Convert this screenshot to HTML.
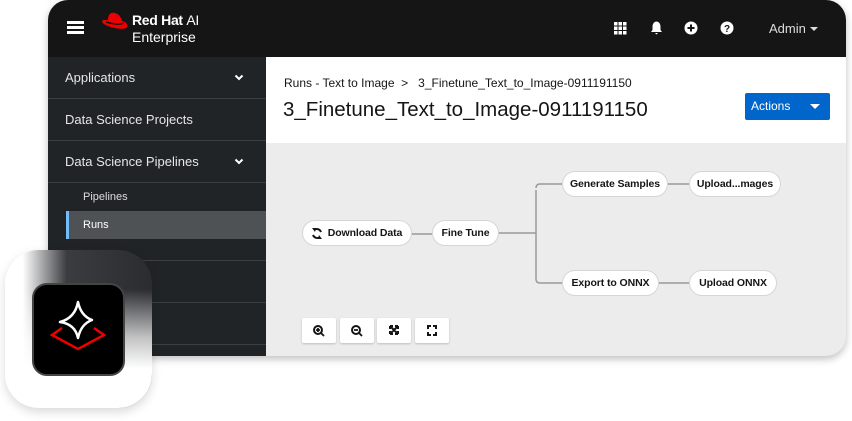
<!DOCTYPE html>
<html><head><style>
*{margin:0;padding:0;box-sizing:border-box}
body{width:852px;height:421px;background:#fff;font-family:"Liberation Sans",sans-serif;position:relative;overflow:hidden}
.win{position:absolute;left:48px;top:0;width:798px;height:356px;border-radius:20px;overflow:hidden;background:#ececec;box-shadow:0 3px 8px rgba(0,0,0,.25)}
.hdr{position:absolute;left:0;top:0;width:100%;height:57px;background:#151515}
.side{position:absolute;left:0;top:57px;width:218px;height:300px;background:#212427}
.row{position:absolute;left:0;width:218px;color:#e6e6e6;font-size:13px;border-bottom:1px solid #3c3f42}
.chev{position:absolute;left:186px;top:17px}
.main{position:absolute;left:218px;top:57px;width:580px;height:86px;background:#fff}
.node{position:absolute;height:26px;background:#fff;border:1px solid #d6d6d6;border-radius:14px;font-size:10.5px;font-weight:bold;color:#151515;line-height:24px;text-align:center;letter-spacing:-.1px}
.zb{position:absolute;top:318px;width:34px;height:25px;background:#fff;border-radius:2px;box-shadow:0 1px 2px rgba(0,0,0,.2)}
.t{position:absolute;color:#fff}
</style></head><body>
<div class="win">
 <div class="hdr">
  <div style="position:absolute;left:19px;top:21px;width:17px;height:3px;background:#fff;box-shadow:0 5px 0 #fff,0 10px 0 #fff"></div>
  <svg style="position:absolute;left:52px;top:11px" width="30" height="20" viewBox="0 0 30 20"><path d="M8 9 C8 3 11 1 15 2 C19 3 21 6 22 10 C26 11 28 13 27 16 C25 19 15 18 8 15 C3 13 1 11 3 9 Z" fill="#e00"/><path d="M6 11 C12 13 20 14 24 12" stroke="#111" stroke-width="1.5" fill="none"/></svg>
  <div class="t" style="left:84px;top:12px;font-size:14px;font-weight:bold;letter-spacing:-.3px">Red Hat <span style="font-weight:normal">AI</span></div>
  <div class="t" style="left:84px;top:29px;font-size:14px">Enterprise</div>
  <svg style="position:absolute;left:566px;top:22px" width="13" height="13"><g fill="#fff"><rect x="0" y="0" width="3.5" height="3.5"/><rect x="4.5" y="0" width="3.5" height="3.5"/><rect x="9" y="0" width="3.5" height="3.5"/><rect x="0" y="4.5" width="3.5" height="3.5"/><rect x="4.5" y="4.5" width="3.5" height="3.5"/><rect x="9" y="4.5" width="3.5" height="3.5"/><rect x="0" y="9" width="3.5" height="3.5"/><rect x="4.5" y="9" width="3.5" height="3.5"/><rect x="9" y="9" width="3.5" height="3.5"/></g></svg>
  <svg style="position:absolute;left:602px;top:21px" width="13" height="14"><path d="M6.5 0.5 C3 1 2.5 4 2.5 6 L2.5 9 L1 11 L12 11 L10.5 9 L10.5 6 C10.5 4 10 1 6.5 0.5Z M5 12 L8 12 L6.5 13.5Z" fill="#fff"/></svg>
  <svg style="position:absolute;left:636px;top:21px" width="14" height="14"><circle cx="7" cy="7" r="6.5" fill="#fff"/><path d="M7 3.5V10.5M3.5 7H10.5" stroke="#151515" stroke-width="2"/></svg>
  <svg style="position:absolute;left:672px;top:21px" width="14" height="14"><circle cx="7" cy="7" r="6.5" fill="#fff"/><text x="7" y="11" text-anchor="middle" font-size="10" font-weight="bold" font-family="Liberation Sans" fill="#151515">?</text></svg>
  <div class="t" style="left:721px;top:21px;font-size:13px;color:#ddd">Admin</div>
  <div style="position:absolute;left:762px;top:27px;border-left:4px solid transparent;border-right:4px solid transparent;border-top:4px solid #ddd"></div>
 </div>
 <div class="side">
  <div class="row" style="top:0;height:42px;line-height:42px;padding-left:17px">Applications<svg class="chev" width="10" height="7"><path d="M1.5 1.5L5 5L8.5 1.5" stroke="#fff" stroke-width="2" fill="none"/></svg></div>
  <div class="row" style="top:42px;height:42px;line-height:42px;padding-left:17px">Data Science Projects</div>
  <div class="row" style="top:84px;height:42px;line-height:42px;padding-left:17px">Data Science Pipelines<svg class="chev" width="10" height="7"><path d="M1.5 1.5L5 5L8.5 1.5" stroke="#fff" stroke-width="2" fill="none"/></svg></div>
  <div style="position:absolute;top:134px;left:35px;color:#ddd;font-size:11px">Pipelines</div>
  <div style="position:absolute;top:154px;left:18px;width:200px;height:28px;background:#4f5255;border-left:3px solid #73bcf7;color:#fff;font-size:11px;line-height:28px;padding-left:14px">Runs</div>
  <div class="row" style="top:182px;height:22px"></div>
  <div class="row" style="top:204px;height:42px"></div>
  <div class="row" style="top:246px;height:42px"></div>
 </div>
 <div class="main">
  <div style="position:absolute;left:18px;top:19px;font-size:12px;color:#151515">Runs - Text to Image &nbsp;&gt;&nbsp;&nbsp; 3_Finetune_Text_to_Image-0911191150</div>
  <div style="position:absolute;left:17px;top:41px;font-size:20.5px;color:#151515">3_Finetune_Text_to_Image-0911191150</div>
  <div style="position:absolute;left:479px;top:36px;width:85px;height:27px;background:#0066cc;border-radius:2px;color:#fff;font-size:12px;line-height:27px;padding-left:6px">Actions<div style="position:absolute;right:10px;top:11px;border-left:5px solid transparent;border-right:5px solid transparent;border-top:5px solid #fff"></div></div>
 </div>
</div>
<svg style="position:absolute;left:0;top:0" width="852" height="421"><g stroke="#9a9a9a" stroke-width="1.5" fill="none"><path d="M411 234H432M498 233H536M536 190V279Q536 283 540 283H562M536 188Q536 184 540 184H562M667 184H689M659 283H689"/></g></svg>
<div class="node" style="left:302px;top:220px;width:110px;padding-left:16px">Download Data</div>
<svg style="position:absolute;left:311px;top:227px" width="12" height="13" viewBox="0 0 12 13"><path d="M3 3 A4.5 4.5 0 0 1 10 5 M9 10 A4.5 4.5 0 0 1 2 8" stroke="#151515" stroke-width="2" fill="none"/><path d="M1 1L5 1L4 5Z M11 12L7 12L8 8Z" fill="#151515"/></svg>
<div class="node" style="left:432px;top:220px;width:67px">Fine Tune</div>
<div class="node" style="left:562px;top:171px;width:106px">Generate Samples</div>
<div class="node" style="left:689px;top:171px;width:92px">Upload...mages</div>
<div class="node" style="left:562px;top:270px;width:97px">Export to ONNX</div>
<div class="node" style="left:689px;top:270px;width:88px">Upload ONNX</div>
<div class="zb" style="left:302px"><svg width="34" height="25"><circle cx="16" cy="12" r="4" stroke="#151515" stroke-width="2" fill="none"/><path d="M19 15L22 18M14 12H18M16 10V14" stroke="#151515" stroke-width="1.8"/></svg></div>
<div class="zb" style="left:340px"><svg width="34" height="25"><circle cx="16" cy="12" r="4" stroke="#151515" stroke-width="2" fill="none"/><path d="M19 15L22 18M14 12H18" stroke="#151515" stroke-width="1.8"/></svg></div>
<div class="zb" style="left:377px"><svg width="34" height="25"><path d="M13 8L21 16M21 8L13 16M13 8h3M13 8v3M21 8h-3M21 8v3M13 16h3M13 16v-3M21 16h-3M21 16v-3" stroke="#151515" stroke-width="2"/></svg></div>
<div class="zb" style="left:415px"><svg width="34" height="25"><path d="M13 11V8H16M18 8H21V11M21 14V17H18M16 17H13V14" stroke="#151515" stroke-width="2" fill="none"/></svg></div>
<div style="position:absolute;left:5px;top:250px;width:147px;height:158px;border-radius:34px;background:linear-gradient(90deg,#fff 12%,#3a3c3f 42%,#2a2c2f 100%);box-shadow:0 4px 10px rgba(0,0,0,.15)"></div>
<div style="position:absolute;left:5px;top:250px;width:147px;height:158px;border-radius:34px;background:linear-gradient(180deg,rgba(255,255,255,0) 25%,rgba(255,255,255,.7) 55%,#fff 75%)"></div>
<div style="position:absolute;left:32px;top:283px;width:93px;height:93px;border-radius:15px;background:#000;border:2px solid #444"></div>
<svg style="position:absolute;left:32px;top:283px" width="93" height="93"><path d="M46 19 Q49 33 60 37 Q49 41 46 55 Q43 41 28 39 Q43 35 46 19Z" stroke="#fff" stroke-width="2.5" fill="none" stroke-linejoin="round"/><path d="M30 45L20 52L46 66L72 52L62 45" stroke="#e00" stroke-width="2.5" fill="none"/></svg>
</body></html>
